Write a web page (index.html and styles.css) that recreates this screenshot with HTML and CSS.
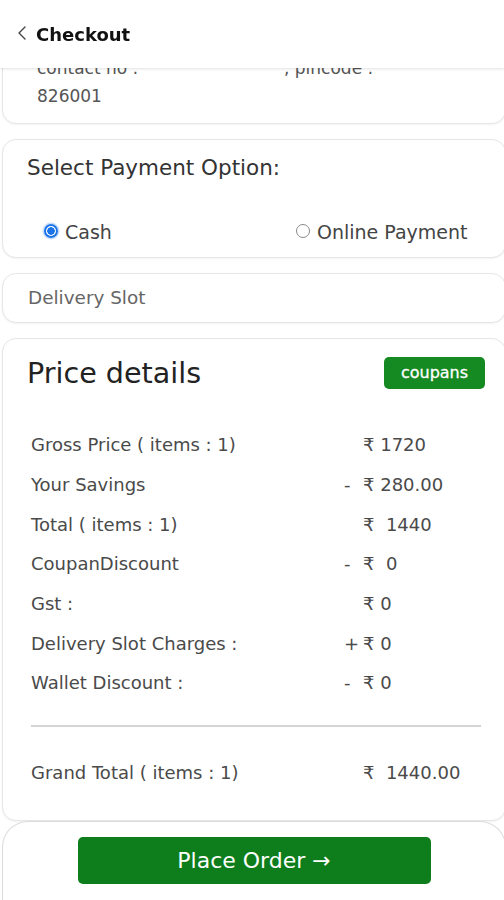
FILE: index.html
```html
<!DOCTYPE html>
<html lang="en">
<head>
<meta charset="utf-8">
<title>Checkout</title>
<link rel="stylesheet" href="styles.css">
</head>
<body>
<header class="topbar">
  <svg class="back" width="10" height="16" viewBox="0 0 10 16"><path d="M8 2 L2 8 L8 14" fill="none" stroke="#444" stroke-width="1.4" stroke-linecap="round" stroke-linejoin="round"/></svg>
  <span class="title">Checkout</span>
</header>
<main class="page">
  <section class="card address">
    <div class="line"><span class="contact">contact no :</span>, pincode :</div>
    <div class="line">826001</div>
  </section>

  <section class="card payment">
    <div class="pay-title">Select Payment Option:</div>
    <div class="pay-options">
      <label class="opt opt-cash"><span class="radio checked"></span>Cash</label>
      <label class="opt opt-online"><span class="radio"></span>Online Payment</label>
    </div>
  </section>

  <section class="card slot">Delivery Slot</section>

  <section class="card price">
    <div class="price-head">
      <h2 class="price-title">Price details</h2>
      <button class="coupans">coupans</button>
    </div>
    <div class="rows">
      <div class="row"><span class="lbl">Gross Price ( items : 1)</span><span class="val"><span class="sign"></span>₹ 1720</span></div>
      <div class="row"><span class="lbl">Your Savings</span><span class="val"><span class="sign">-</span>₹ 280.00</span></div>
      <div class="row"><span class="lbl">Total ( items : 1)</span><span class="val"><span class="sign"></span>₹&nbsp; 1440</span></div>
      <div class="row"><span class="lbl">CoupanDiscount</span><span class="val"><span class="sign">-</span>₹&nbsp; 0</span></div>
      <div class="row"><span class="lbl">Gst :</span><span class="val"><span class="sign"></span>₹ 0</span></div>
      <div class="row"><span class="lbl">Delivery Slot Charges :</span><span class="val"><span class="sign">+</span>₹ 0</span></div>
      <div class="row"><span class="lbl">Wallet Discount :</span><span class="val"><span class="sign">-</span>₹ 0</span></div>
    </div>
    <hr class="divider">
    <div class="row grand"><span class="lbl">Grand Total ( items : 1)</span><span class="val"><span class="sign"></span>₹&nbsp; 1440.00</span></div>
  </section>

  <footer class="bottom">
    <button class="place">Place Order →</button>
  </footer>
</main>
</body>
</html>
```
FILE: styles.css
```css
* { box-sizing: border-box; }
html, body { margin: 0; padding: 0; background: #fff; }
body {
  font-family: "DejaVu Sans", "Open Sans", sans-serif;
  color: #444;
  width: 504px;
  overflow: hidden;
}
.topbar {
  position: fixed;
  top: 0; left: 0; right: 0;
  height: 68px;
  background: #fff;
  display: flex;
  align-items: center;
  padding-left: 17px;
  gap: 9px;
  box-shadow: 0 1px 3px rgba(0,0,0,0.12);
  z-index: 5;
}
.back { margin-top: -2px; }
.title {
  font-family: "DejaVu Sans", sans-serif;
  font-weight: 700;
  font-size: 18px;
  color: #111;
  margin-top: 1px;
}
.page {
  padding-top: 41px;
  display: flex;
  flex-direction: column;
  gap: 15px;
}
.card {
  margin-left: 2px;
  margin-right: -2px;
  background: #fff;
  border: 1px solid #e6e6e6;
  border-radius: 14px;
  box-shadow: 0 1px 2px rgba(0,0,0,0.05);
}
.address {
  padding: 13px 20px 13px 34px;
  font-size: 17px;
  color: #555;
}
.address .line { line-height: 27.5px; white-space: nowrap; }
.contact { display: inline-block; width: 247px; }

.payment { padding: 14px 20px 13px 24px; }
.pay-title { font-size: 21.5px; line-height: 28px; color: #333; }
.pay-options {
  margin-top: 38px;
  display: flex;
  height: 24px;
  align-items: center;
  font-size: 19px;
  color: #444;
}
.opt { display: flex; align-items: center; gap: 7px; }
.opt-cash { margin-left: 17px; width: 252px; }
.radio {
  width: 14px; height: 14px;
  border-radius: 50%;
  border: 1.5px solid #8a8a8a;
  display: inline-block;
  margin-top: -3px;
  flex: none;
}
.radio.checked {
  border: 2px solid #1a73e8;
  background: radial-gradient(circle, #1a73e8 0 3.5px, #fff 4px);
  box-shadow: 0 0 0 1.5px #c9dcfb;
}

.slot {
  height: 50px;
  padding-bottom: 2px;
  display: flex;
  align-items: center;
  padding-left: 25px;
  font-size: 18.4px;
  color: #666;
}

.price { padding: 17px 20px 0 24px; height: 483px; }
.price-head {
  display: flex;
  justify-content: space-between;
  align-items: center;
  height: 34px;
}
.price-title {
  margin: 0;
  font-weight: 400;
  font-size: 28.6px;
  color: #222;
}
.coupans {
  width: 101px; height: 32px;
  margin-top: -1px;
  border: none;
  border-radius: 5px;
  background: #168a22;
  color: #fff;
  font-family: "DejaVu Sans", sans-serif;
  font-weight: 400;
  font-size: 16px;
  -webkit-text-stroke: 0.3px #fff;
}
.rows { margin-top: 35px; display: flex; flex-direction: column; }
.row {
  display: grid;
  grid-template-columns: 313px 1fr;
  height: 39.7px;
  align-items: center;
  padding-left: 4px;
  font-size: 18px;
  color: #4a4a4a;
  white-space: nowrap;
}
.sign { display: inline-block; width: 19px; }
.divider {
  margin: 22px 0 0 4px;
  width: 450px;
  border: none;
  height: 2px;
  background: #d4d4d4;
}
.grand { margin-top: 26px; }

.bottom {
  margin-top: -15px;
  margin-left: 2px;
  margin-right: -2px;
  height: 90px;
  border: 1px solid #dcdcdc;
  border-bottom: none;
  border-radius: 26px 26px 0 0;
  background: #fff;
  display: flex;
  justify-content: center;
  padding-top: 15px;
}
.place {
  width: 353px;
  height: 47px;
  border: none;
  border-radius: 5px;
  background: #0e7d1c;
  color: #fff;
  font-family: "DejaVu Sans", sans-serif;
  font-size: 22px;
}
```
